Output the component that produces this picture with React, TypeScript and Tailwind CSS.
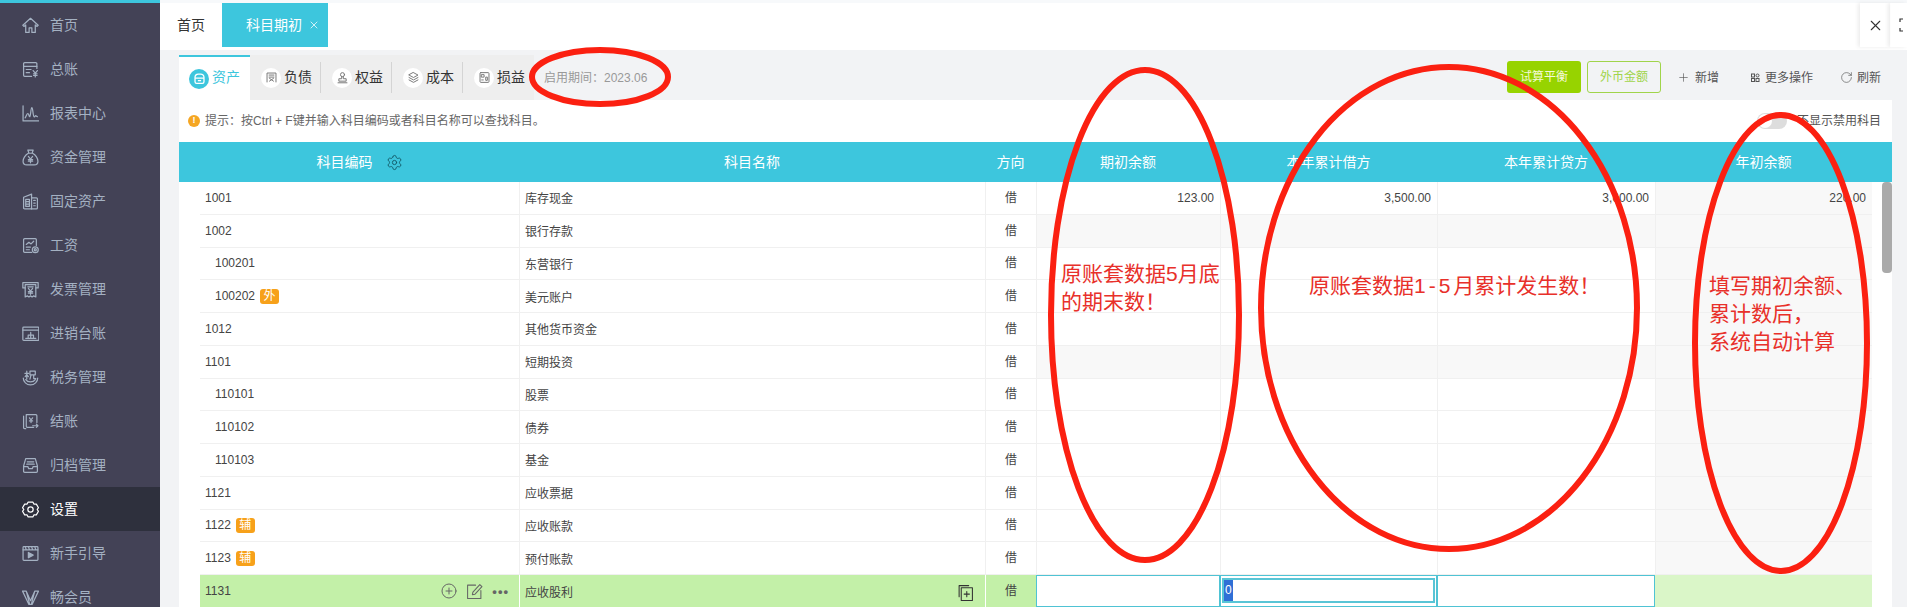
import { Settings, Plus, RotateCw, X } from 'lucide-react';
import type { ReactNode } from 'react';

const Ico = ({ children, size = 17, sw = 1.15 }: { children: ReactNode; size?: number; sw?: number }) => (
  <svg
    width={size}
    height={size}
    viewBox="0 0 16 16"
    fill="none"
    stroke="currentColor"
    strokeWidth={sw}
    strokeLinejoin="round"
    strokeLinecap="round"
  >
    {children}
  </svg>
);

const NAV: { label: string; icon: ReactNode; active?: boolean }[] = [
  {
    label: '首页',
    icon: <path d="M8 1.200 .8 7.800l1 1.100 1.700-1.400v7h3.200v-4.300h2.600v4.300h3.200v-7l1.700 1.400 1-1.100z" />,
  },
  {
    label: '总账',
    icon: (
      <>
        <path d="M14 7V2.500a1 1 0 0 0-1-1H2.500a1 1 0 0 0-1 1v11a1 1 0 0 0 1 1H9" />
        <path d="M1.500 5h12.500M4 8h4.500M4 11h3" />
        <path d="M10.500 9l2 2.500 2-2.500M12.500 11.500V15M10.800 12h3.400M10.800 13.500h3.400" />
      </>
    ),
  },
  {
    label: '报表中心',
    icon: (
      <>
        <path d="M1 .800V15h15" />
        <path d="M3 12c1-1 1.500-4 2.500-4s1 3 1.800 3 1-8.500 2-8.500 1 8 2 8.500 1-1 1.500-1 .8 1 1.700 1" />
      </>
    ),
  },
  {
    label: '资金管理',
    icon: (
      <>
        <path d="M5.500 1h5L9.500 4h-3z" />
        <path d="M6 4C3 5.500 1 9 1 11.500 1 14 2.500 15 4.500 15h7c2 0 3.500-1 3.500-3.500C15 9 13 5.500 10 4" />
        <path d="M6 7l2 2.500L10 7M8 9.500V13M6 10h4M6 11.500h4" />
      </>
    ),
  },
  {
    label: '固定资产',
    icon: (
      <>
        <path d="M1.500 4 9 1v14H2.500a1 1 0 0 1-1-1z" />
        <path d="M9 4.500h4.500a1 1 0 0 1 1 1V14a1 1 0 0 1-1 1H9" />
        <path d="M3.500 6h3.500v6.500H3.500zM3.500 8.200H7M3.500 10.400H7M11 7h1.500M11 9.500h1.500M11 12h1.500" />
      </>
    ),
  },
  {
    label: '工资',
    icon: (
      <>
        <path d="M9 14.500H2.500a1 1 0 0 1-1-1v-11a1 1 0 0 1 1-1h10a1 1 0 0 1 1 1V8" />
        <path d="M4 7l2.500-2 2 1.500L11 4M4 9.500h4M4 12h3" />
        <circle cx="12.500" cy="12" r="2.800" />
        <circle cx="12.500" cy="12" r="1" />
      </>
    ),
  },
  {
    label: '发票管理',
    icon: (
      <>
        <path d="M3 6.500H.8V1.500h14.400v5H13" />
        <path d="M3 3.500v11.500l2-1 1.500 1L8 14l1.500 1 1.500-1 2 1V3.500z" />
        <path d="M5.500 5.500h5M6 7l2 2.500L10 7M8 9.500V12.500M6 10h4M6 11.500h4" />
      </>
    ),
  },
  {
    label: '进销台账',
    icon: (
      <>
        <rect x=".8" y="2" width="15" height="12.500" rx=".8" />
        <path d="M.8 4.800h15M3.500 12.500h9.500M8.200 7v5.500M5.800 9.500h5M5.800 9.500v3M10.800 9.500v3" />
      </>
    ),
  },
  {
    label: '税务管理',
    icon: (
      <>
        <path d="M1.200 8.500c0 3.500 3 6.500 6.800 6.500s6.800-3 6.800-6.500" />
        <path d="M3.500 10c1 1.500 2.800 2.200 4.500 2.200s3.500-.700 4.500-2.200" />
        <path d="M4.500 2v7.500M2.800 4.200h3.400M3 7.200l1.500-2 1.500 2M7.500 2h5v3.500h-5zM8.500 5.500 7.500 9.500M11 5.500v3.500h2" />
      </>
    ),
  },
  {
    label: '结账',
    icon: (
      <>
        <path d="M3.500 14.800h-1a1 1 0 0 1-1-1V3" />
        <path d="M11 13.500H5a1 1 0 0 1-1-1v-11h9a1 1 0 0 1 1 1V9" />
        <path d="M7 4.500l1.500 2 1.500-2M8.500 6.500V9M7 7.500h3M10 12h5M13.500 10.500l1.500 1.500-1.500 1.500" />
      </>
    ),
  },
  {
    label: '归档管理',
    icon: (
      <>
        <path d="M3.500 1.500h9l2 7v5a1 1 0 0 1-1 1h-11a1 1 0 0 1-1-1v-5z" />
        <path d="M1.500 9h4l.8 2h3.400l.8-2h4M5 4.500h6M4.500 6.800h7" />
      </>
    ),
  },
  {
    label: '设置',
    active: true,
    icon: (
      <>
        <path d="M5.800 1h4.400l1 1.900 2.300.1 2 3.300L14.300 8l1.200 1.700-2 3.300-2.300.1-1 1.900H5.800l-1-1.900-2.300-.1-2-3.300L1.700 8 .5 6.300l2-3.300 2.300-.1z" />
        <circle cx="8" cy="8" r="2.500" />
      </>
    ),
  },
  {
    label: '新手引导',
    icon: (
      <>
        <rect x="1" y="1.500" width="14" height="13" rx=".8" />
        <path d="M1 4.500h14M3 1.500l1 3M6 1.500l1 3M9 1.500l1 3M12 1.500l1 3" />
        <path d="M6 7l4.500 2.500L6 12z" fill="currentColor" />
      </>
    ),
  },
  {
    label: '畅会员',
    icon: <path d="M.5 2h3.500l4 9 4-9h3.500L9.500 14.500h-3zM4 2l3 11.500M12 2 9 13.500" />,
  },
];

const ROWS: { code: string; name: string; indent?: boolean; badge?: string; parent?: boolean }[] = [
  { code: '1001', name: '库存现金' },
  { code: '1002', name: '银行存款', parent: true },
  { code: '100201', name: '东营银行', indent: true },
  { code: '100202', name: '美元账户', indent: true, badge: '外' },
  { code: '1012', name: '其他货币资金' },
  { code: '1101', name: '短期投资', parent: true },
  { code: '110101', name: '股票', indent: true },
  { code: '110102', name: '债券', indent: true },
  { code: '110103', name: '基金', indent: true },
  { code: '1121', name: '应收票据' },
  { code: '1122', name: '应收账款', badge: '辅' },
  { code: '1123', name: '预付账款', badge: '辅' },
];

const SUBTABS: { label: string; icon: ReactNode }[] = [
  {
    label: '负债',
    icon: (
      <>
        <path d="M2.500 13.500V2.500h11v11" />
        <path d="M5 5h6M5 7.500h6M5.500 12.500l5-3.500M5.500 9l5 3.500" />
      </>
    ),
  },
  {
    label: '权益',
    icon: (
      <>
        <circle cx="8" cy="4.500" r="2.500" />
        <path d="M7 7v2.500H3.500v3h9v-3H9V7M2.500 14.500h11" />
      </>
    ),
  },
  {
    label: '成本',
    icon: <path d="M8 2 13.500 5 8 8 2.500 5zM2.500 8 8 11l5.500-3M2.500 11 8 14l5.500-3" />,
  },
  {
    label: '损益',
    icon: (
      <>
        <rect x="2.500" y="2" width="11" height="12" rx="1" />
        <path d="M4.500 4.500h3v3h-3zM4.500 11h2M9.500 8v3.500h2V8z" />
      </>
    ),
  },
];

function Row({ row }: { row: (typeof ROWS)[number] }) {
  const fill = row.parent ? 'bg-[#f8f8f8]' : '';
  return (
    <div className="flex h-[32.75px] border-b border-[#f0f0f0] text-[12px] text-[#444]">
      <div className={`flex w-[319px] items-center ${row.indent ? 'pl-[15px]' : 'pl-[5px]'}`}>
        {row.code}
        {row.badge && (
          <span className="ml-[5px] flex h-[15px] w-[19px] items-center justify-center rounded-[3px] bg-[#f7a11a] text-white">
            {row.badge}
          </span>
        )}
      </div>
      <div className="flex w-[466px] items-center border-l border-[#f0f0f0] pl-[5px] pt-[3px]">{row.name}</div>
      <div className="flex w-[51px] items-center justify-center border-l border-[#f0f0f0]">借</div>
      <div className={`w-[184px] border-l border-[#f0f0f0] ${fill}`} />
      <div className={`w-[217px] border-l border-[#f0f0f0] ${fill}`} />
      <div className={`w-[218px] border-l border-[#f0f0f0] ${fill}`} />
      <div className="w-[217px] border-l border-[#f0f0f0] bg-[#f8f8f8]" />
    </div>
  );
}

function FirstRow() {
  const cell = 'flex items-center justify-end border-l border-[#f0f0f0] pr-[6px] pt-[1px]';
  return (
    <div className="flex h-[32.75px] border-b border-[#f0f0f0] text-[12px] text-[#444]">
      <div className="flex w-[319px] items-center pl-[5px]">1001</div>
      <div className="flex w-[466px] items-center border-l border-[#f0f0f0] pl-[5px] pt-[3px]">库存现金</div>
      <div className="flex w-[51px] items-center justify-center border-l border-[#f0f0f0]">借</div>
      <div className={`w-[184px] ${cell}`}>123.00</div>
      <div className={`w-[217px] ${cell}`}>3,500.00</div>
      <div className={`w-[218px] ${cell}`}>3,600.00</div>
      <div className={`w-[217px] bg-[#f8f8f8] ${cell}`}>220.00</div>
    </div>
  );
}

function EditRow() {
  return (
    <div className="flex h-[32px] bg-[#c3f0a8] text-[12px] text-[#444]">
      <div className="flex w-[319px] items-center pl-[5px]">
        1131
        <div className="ml-auto flex items-center gap-[9px] pr-[10px] text-[#666]">
          <Ico size={16} sw={1}>
            <circle cx="8" cy="8" r="7" />
            <path d="M8 5v6M5 8h6" />
          </Ico>
          <Ico size={17} sw={1}>
            <path d="M14 7v7.500H1.500V2H9" />
            <path d="M6 11l.5-2.500L13 1.500l2 2-6.500 7z" />
          </Ico>
          <span className="text-[13px] font-bold leading-none tracking-[1px]">•••</span>
        </div>
      </div>
      <div className="flex w-[466px] items-center border-l border-white pl-[5px] pt-[3px]">
        应收股利
        <span className="ml-auto pr-[11px] text-[#333]">
          <Ico size={17} sw={1}>
            <path d="M2 12V1.500h9" />
            <rect x="4" y="3.500" width="10.500" height="12" />
            <path d="M9.200 7v5M6.700 9.500h5" />
          </Ico>
        </span>
      </div>
      <div className="flex w-[51px] items-center justify-center border-l border-white">借</div>
      <div className="w-[184px] border border-[#4fc3d4] bg-white" />
      <div className="w-[217px] border border-[#4fc3d4] bg-white px-[1px] pt-[2px]">
        <div className="flex h-[25px] items-center border-2 border-[#59c5d6] text-[12px]">
          <span className="bg-[#2f6fd6] px-[1px] leading-[21px] text-white">0</span>
        </div>
      </div>
      <div className="w-[218px] border border-[#4fc3d4] bg-white" />
      <div className="w-[217px] bg-[#daf6c8]" />
    </div>
  );
}

export default function App() {
  return (
    <div className="relative flex h-[607px] w-[1907px] overflow-hidden bg-[#f2f3f5] font-['Liberation_Sans','Noto_Sans_CJK_SC',sans-serif]">
      <aside className="flex w-[160px] shrink-0 flex-col bg-[#434256]">
        <div className="h-[3px] shrink-0 bg-[#3dc6dd]" />
        {NAV.map((item) => (
          <div
            key={item.label}
            className={`flex h-[44px] shrink-0 items-center pl-[22px] text-[14px] ${
              item.active ? 'bg-[#2e303d] text-white' : 'text-[#a4b1c2]'
            }`}
          >
            <Ico>{item.icon}</Ico>
            <span className="ml-[11px]">{item.label}</span>
          </div>
        ))}
      </aside>

      <main className="flex min-w-0 flex-1 flex-col">
        <div className="h-[3px] shrink-0 bg-[#f7f9fb]" />
        <div className="flex h-[47px] shrink-0 bg-white pb-[3px]">
          <div className="flex w-[62px] items-center justify-center text-[14px] text-[#333]">首页</div>
          <div className="flex w-[106px] items-center justify-center gap-[6px] bg-[#3dc6dd] pl-[16px] text-[14px] text-white">
            科目期初
            <X size={12} strokeWidth={1.5} />
          </div>
          <div className="ml-auto flex w-[30px] items-center justify-center text-[#333] shadow-[-2px_0_4px_rgba(0,0,0,0.08)]">
            <X size={17} strokeWidth={1.5} />
          </div>
          <div className="flex w-[17px] items-center pl-[9px] text-[#333] shadow-[-2px_0_4px_rgba(0,0,0,0.08)]">
            <svg width="14" height="14" viewBox="0 0 14 14" fill="none" stroke="currentColor" strokeWidth="1.200" className="shrink-0">
              <path d="M1 4V1h3M10 1h3v3M13 10v3h-3M4 13H1v-3" />
            </svg>
          </div>
        </div>

        <div className="flex min-h-0 flex-1 flex-col pl-[19px] pr-[15px] pt-[5px]">
          <div className="flex h-[45px] shrink-0 items-center">
            <div className="flex h-full w-[71px] items-center gap-[3px] border-t-2 border-[#3dc6dd] bg-white pl-[10px] text-[14px] text-[#3dc6dd]">
              <span className="flex h-[20px] w-[20px] items-center justify-center rounded-full bg-[#3dc6dd] text-white">
                <svg width="13" height="13" viewBox="0 0 16 16" fill="none" stroke="currentColor" strokeWidth="1.600">
                  <path d="M2.500 6.500V12a2 2 0 0 0 2 2h7a2 2 0 0 0 2-2V6.500a4 4 0 0 0-4-4h-3a4 4 0 0 0-4 4zM2.500 7.500h11M6 10.500h4" />
                </svg>
              </span>
              <span className="-mt-[2px]">资产</span>
            </div>
            <div className="flex h-full items-center bg-[#eeeeee]">
              {SUBTABS.map((tab, i) => (
                <div key={tab.label} className="flex h-full w-[71px] items-center">
                  <div className="flex flex-1 items-center gap-[3px] pl-[11px] text-[14px] text-[#333]">
                    <span className="flex h-[20px] w-[20px] items-center justify-center rounded-full bg-white text-[#777]">
                      <Ico size={13} sw={1.2}>{tab.icon}</Ico>
                    </span>
                    {tab.label}
                  </div>
                  {i < 3 && <div className="h-[31px] w-px bg-[#d4d4d4]" />}
                </div>
              ))}
            </div>
            <span className="ml-[10px] text-[12px] text-[#999]">启用期间：2023.06</span>

            <div className="ml-auto flex h-[32px] w-[74px] -translate-y-[1px] items-center justify-center rounded-[3px] bg-[#97d300] text-[12px] text-[#f4f9d8]">
              试算平衡
            </div>
            <div className="ml-[6px] flex h-[32px] w-[74px] -translate-y-[1px] items-center justify-center rounded-[3px] border border-[#a0d44a] text-[12px] text-[#a0d44a]">
              外币金额
            </div>
            <div className="ml-[16px] flex items-center gap-[5px] text-[12px] text-[#555]">
              <Plus size={13} strokeWidth={1.200} />
              新增
            </div>
            <div className="ml-[32px] flex items-center gap-[5px] text-[12px] text-[#555]">
              <svg width="9" height="9" viewBox="0 0 9 9" fill="none" stroke="currentColor">
                <rect x=".5" y="1" width="3" height="3" />
                <rect x="5" y="1" width="3" height="3" rx="1.500" />
                <rect x=".5" y="5.500" width="3" height="3" />
                <rect x="5" y="5.500" width="3" height="3" />
              </svg>
              更多操作
            </div>
            <div className="ml-[27px] mr-[11px] flex items-center gap-[4px] text-[12px] text-[#555]">
              <RotateCw size={13} strokeWidth={1.200} />
              刷新
            </div>
          </div>

          <div className="flex min-h-0 flex-1 flex-col bg-white">
            <div className="flex h-[42px] shrink-0 items-center pl-[9px] pr-[11px] text-[12px] text-[#666]">
              <span className="flex h-[12px] w-[12px] items-center justify-center rounded-full bg-[#f5a623] text-[9px] font-bold text-white">!</span>
              <span className="ml-[5px]">提示：按Ctrl + F键并输入科目编码或者科目名称可以查找科目。</span>
              <span className="ml-auto h-[16px] w-[30px] rounded-full bg-[#dddddd] p-[1px]">
                <span className="block h-[14px] w-[14px] rounded-full bg-white" />
              </span>
              <span className="ml-[10px] text-[#555]">不显示禁用科目</span>
            </div>

            <div className="flex h-[40px] shrink-0 items-center bg-[#3dc6dd] text-[14px] text-white">
              <div className="flex w-[340px] items-center justify-center gap-[13px] pl-[21px]">
                科目编码
                <Settings size={17} strokeWidth={1.300} className="text-[#125a69]" />
              </div>
              <div className="w-[466px] text-center">科目名称</div>
              <div className="w-[51px] text-center">方向</div>
              <div className="w-[184px] text-center">期初余额</div>
              <div className="w-[217px] text-center">本年累计借方</div>
              <div className="w-[218px] text-center">本年累计贷方</div>
              <div className="w-[217px] text-center">年初余额</div>
            </div>

            <div className="flex min-h-0 flex-1 overflow-hidden">
              <div className="w-[21px] shrink-0" />
              <div className="w-[1672px] shrink-0">
                <FirstRow />
                {ROWS.slice(1).map((row) => (
                  <Row key={row.code} row={row} />
                ))}
                <EditRow />
              </div>
              <div className="w-[20px] shrink-0 pl-[10px]">
                <div className="h-[91px] rounded-[4px] bg-[#aaaaaa]" />
              </div>
            </div>
          </div>
        </div>
      </main>

      {/* 红色批注 */}
      <svg className="pointer-events-none absolute inset-0" width="1907" height="607" fill="none" stroke="#fb2011" strokeWidth="6">
        <ellipse cx="600" cy="77" rx="68" ry="27" />
        <ellipse cx="1145" cy="315" rx="94" ry="245" />
        <ellipse cx="1449" cy="308" rx="188" ry="241" />
        <ellipse cx="1781" cy="343" rx="86" ry="228" />
      </svg>
      <div className="absolute left-[1061px] top-[260px] text-[21px] leading-[28px] text-[#e8302a]">
        原账套数据5月底
        <br />
        的期末数！
      </div>
      <div className="absolute left-[1309px] top-[272px] text-[21px] leading-[28px] text-[#e8302a]">
        原账套数据<span className="tracking-[3px]">1-5</span>月累计发生数！
      </div>
      <div className="absolute left-[1709px] top-[272px] text-[21px] leading-[28px] text-[#e8302a]">
        填写期初余额、
        <br />
        累计数后，
        <br />
        系统自动计算
      </div>
    </div>
  );
}
